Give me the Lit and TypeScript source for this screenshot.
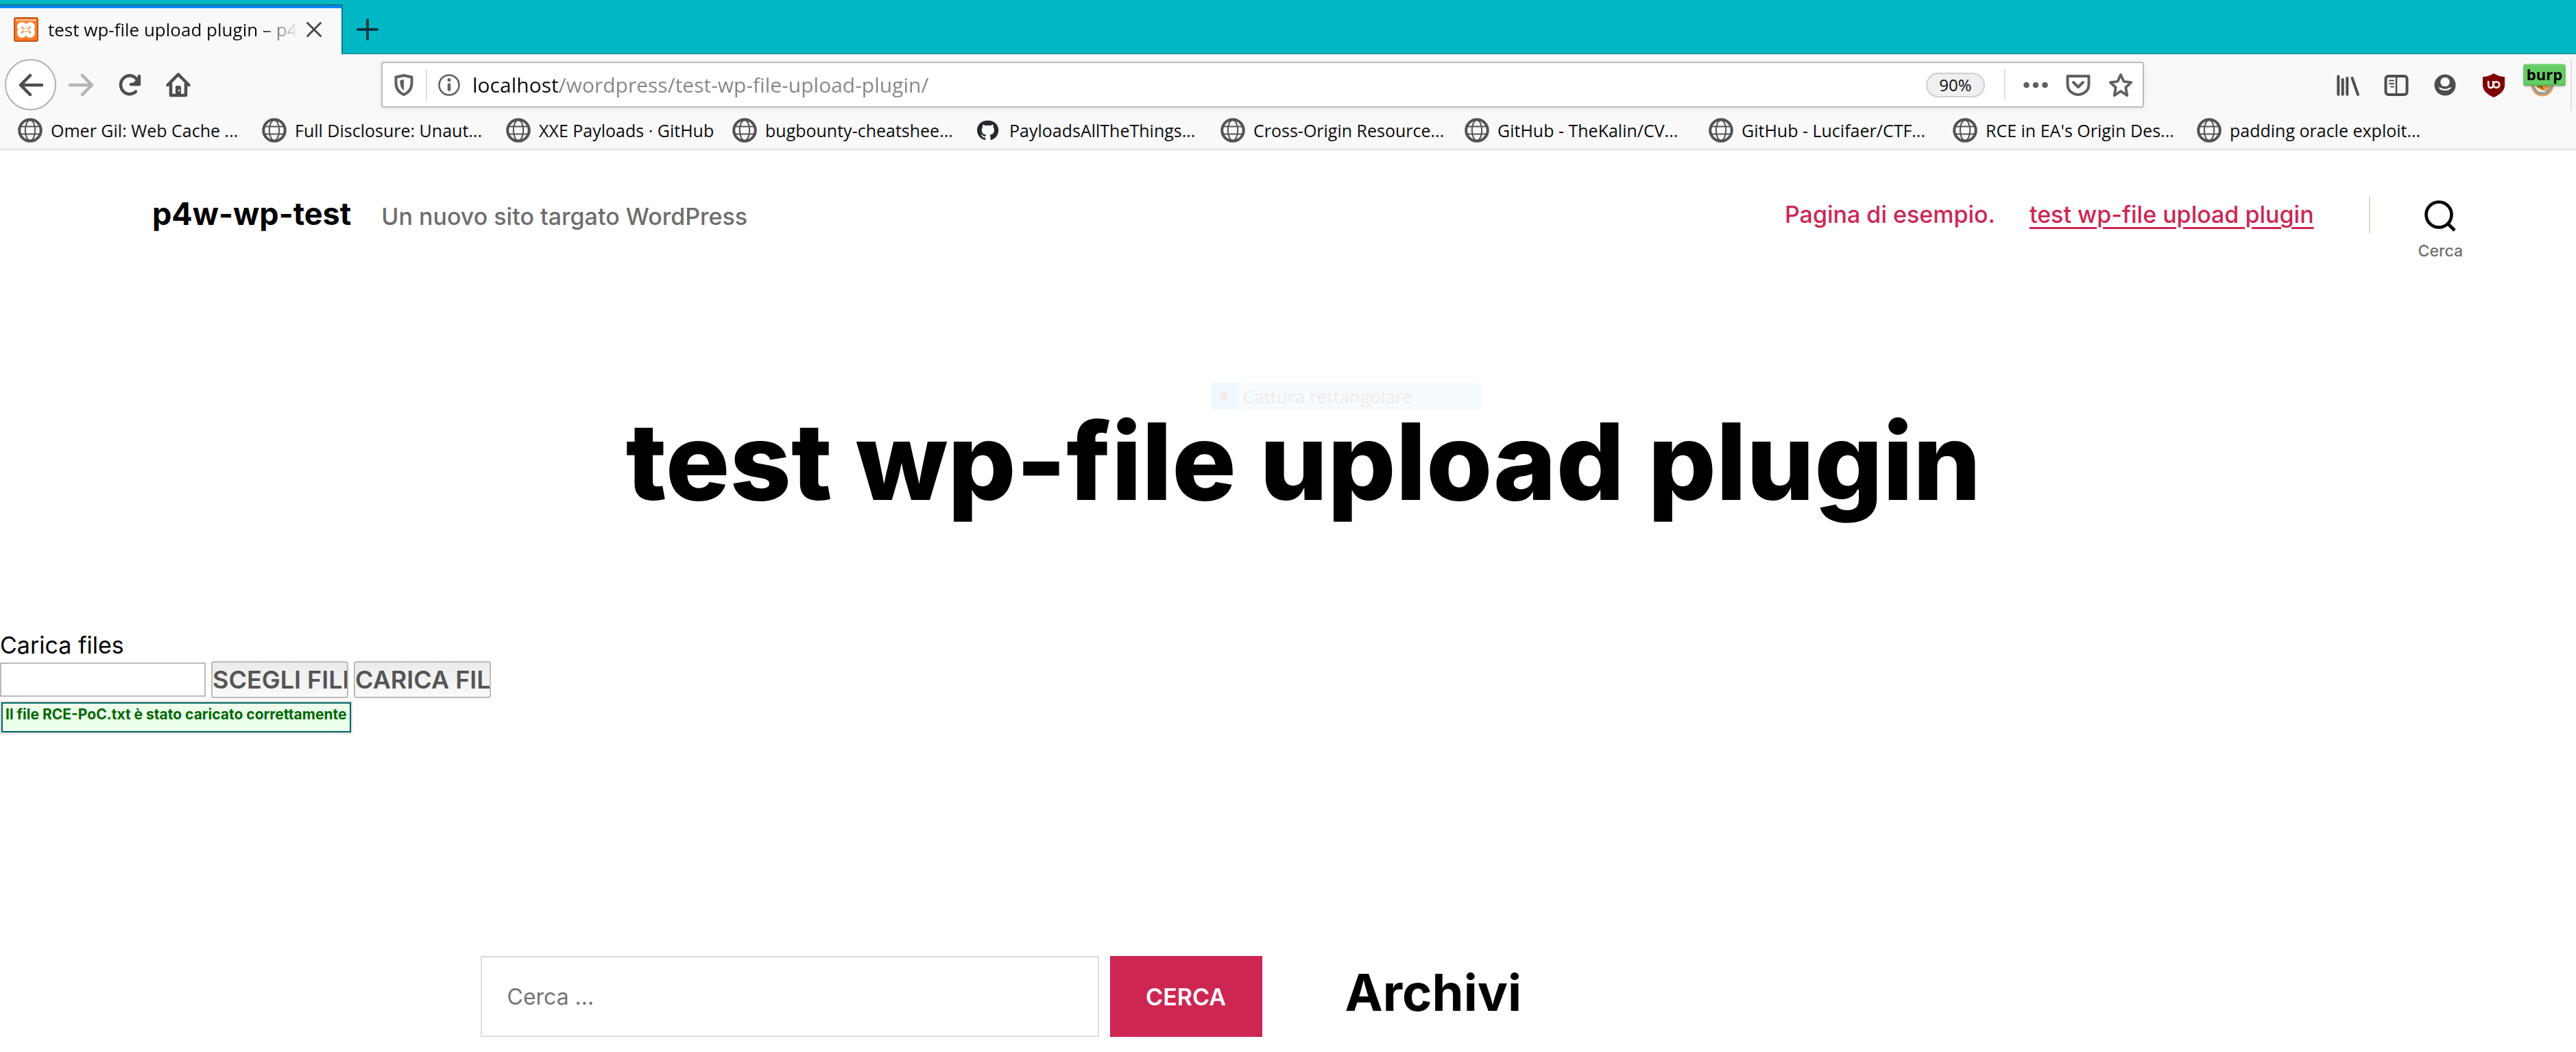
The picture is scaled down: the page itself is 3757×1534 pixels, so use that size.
import { LitElement, html, svg, css } from "lit";
import { customElement } from "lit/decorators.js";

const globe = svg`<circle cx="8" cy="8" r="7" fill="none" stroke="#525254" stroke-width="1.8"/>
  <g fill="none" stroke="#525254" stroke-width="0.9"><ellipse cx="8" cy="8" rx="3.2" ry="6.6"/>
  <path d="M1.6 5.6h12.8M1.6 10.4h12.8"/></g>`;

const github = svg`<path transform="translate(0.6 1.2) scale(0.86)" fill="#24292e" d="M8 .6A7.4 7.4 0 0 0 5.7 15.200c.4.1.5-.2.5-.4v-1.400c-2.100.45-2.500-.9-2.500-.9-.35-.85-.8-1.100-.8-1.100-.7-.45 0-.45 0-.45.75.05 1.150.75 1.150.75.65 1.150 1.750.8 2.200.6.05-.45.25-.8.45-1-1.650-.2-3.400-.8-3.400-3.650 0-.8.3-1.500.75-2-.05-.2-.3-.95.1-2 0 0 .6-.2 2.050.75a7 7 0 0 1 3.700 0c1.400-.95 2-.75 2-.75.4 1.050.15 1.800.1 2 .5.5.75 1.200.75 2 0 2.850-1.700 3.450-3.350 3.650.3.25.5.7.5 1.400v2.050c0 .2.15.45.5.4A7.400 7.400 0 0 0 8 .6z"/>`;

const bookmarks = [
  { text: "Omer Gil: Web Cache ...", icon: globe },
  { text: "Full Disclosure: Unaut...", icon: globe },
  { text: "XXE Payloads · GitHub", icon: globe, short: true },
  { text: "bugbounty-cheatshee...", icon: globe },
  { text: "PayloadsAllTheThings...", icon: github },
  { text: "Cross-Origin Resource...", icon: globe },
  { text: "GitHub - TheKalin/CV...", icon: globe },
  { text: "GitHub - Lucifaer/CTF...", icon: globe },
  { text: "RCE in EA's Origin Des...", icon: globe },
  { text: "padding oracle exploit...", icon: globe },
];

@customElement("browser-chrome")
export class BrowserChrome extends LitElement {
  static styles = css`
    :host {
      display: block;
      font-family: "Open Sans", "Noto Sans", sans-serif;
      font-size: 26px;
      color: #0c0c0d;
      background: #f9f9fa;
      border-bottom: 2px solid #e0e0e1;
    }
    * { box-sizing: border-box; }
    button { border: 0; padding: 0; margin: 0; background: none; font: inherit; color: inherit; }
    svg { display: block; width: 36px; height: 36px; flex: none; }
    a { color: inherit; text-decoration: none; }
    .tabs {
      display: flex;
      height: 79px;
      padding-top: 6px;
      background: #00b7c5;
      box-shadow: inset 0 -1px #00808a;
    }
    .tab {
      display: flex;
      align-items: center;
      width: 500px;
      padding: 0 28px 2px 20px;
      background: #f9f9fa;
      border-top: 2px solid #00808a;
      border-right: 2px solid #00808a;
      box-shadow: inset 0 4px #0a84ff;
    }
    .tab-title {
      flex: 1;
      margin: 0 10px 0 14px;
      line-height: 36px;
      overflow: hidden;
      white-space: nowrap;
      mask-image: linear-gradient(to left, transparent, #000 60px);
    }
    .tab-close svg { width: 24px; height: 24px; }
    .new-tab { margin-left: 18px; }
    .nav { display: flex; align-items: center; height: 89px; padding: 0 6px 0 7px; }
    .back {
      display: grid;
      place-items: center;
      width: 75px;
      height: 75px;
      border: 2px solid #b1b1b3;
      border-radius: 50%;
      background: #fff;
    }
    .tools { display: flex; gap: 35px; margin-left: 18px; width: 456px; }
    .urlbar {
      display: flex;
      align-items: center;
      width: 2571px;
      height: 67px;
      padding: 0 14px 0 13px;
      border: 2px solid #bbbbbc;
      border-radius: 4px;
      background: #fff;
      box-shadow: 0 2px 8px rgba(0, 0, 0, 0.08);
    }
    .rule { width: 2px; height: 46px; background: #e0e0e1; flex: none; }
    .identity { display: flex; align-items: center; gap: 14px; margin-right: 16px; }
    .url {
      flex: 1;
      min-width: 0;
      height: 60px;
      padding: 0;
      border: 0;
      outline: 0;
      font: 30px "Open Sans", "Noto Sans", sans-serif;
      color: transparent;
      background: linear-gradient(to right, #0c0c0d 127px, #858586 127px);
      background-clip: text;
      -webkit-background-clip: text;
    }
    .zoom {
      width: 86px;
      height: 36px;
      border: 2px solid #cfcfd1;
      border-radius: 18px;
      background: #f0f0f1;
      font-size: 24px;
      line-height: 30px;
      text-align: center;
      margin-right: 28px;
    }
    .actions { display: flex; gap: 26px; margin-left: 26px; }
    .extensions { display: flex; align-items: center; gap: 35px; margin-left: auto; height: 75px; }
    .burp { position: relative; }
    .badge {
      position: absolute;
      left: -10px;
      top: -13px;
      width: 62px;
      height: 32px;
      border-radius: 4px;
      background: #66cc66;
      border-top: 2px solid #84d684;
      border-bottom: 2px solid #57b557;
      box-shadow: 0 2px 2px rgba(0, 0, 0, 0.2);
      font-size: 22px;
      font-weight: 700;
      line-height: 26px;
      text-align: center;
      color: #000;
    }
    .edge { width: 2px; height: 75px; background: #dfdfe0; margin-left: -12px; }
    .bookmarks { display: flex; margin: 0; padding: 4px 0 9px 26px; list-style: none; font-size: 25px; }
    .bookmark { width: 356px; }
    .bookmark.short { width: 330px; }
    .bookmark a { display: flex; align-items: center; gap: 12px; line-height: 36px; white-space: nowrap; }
  `;

  render() {
    return html`
      <div class="tabs">
        <div class="tab">
          <svg viewBox="0 0 36 36">
            <rect x="1" y="1" width="34" height="34" rx="2" fill="#fb7a24" stroke="#c25a16" stroke-width="2"/>
            <path d="M3 3h30v3H3z" fill="#f7b080"/>
            <g fill="none" stroke="#fff" stroke-width="6" stroke-linecap="round" stroke-linejoin="round">
              <path d="M15 11.500Q13 10 11 10.500q-3.500 1-3 4.500.5 2 2.500 3.500-3 2-2.500 5 1 3.500 4 3.500 3 0 4-3M21 11.500Q23 10 25 10.500q3.500 1 3 4.500-.5 2-2.500 3.500 3 2 2.500 5-1 3.500-4 3.500-3 0-4-3"/>
            </g>
            <path d="M14 14q4 3 8 0M14 19h8" fill="none" stroke="#fff" stroke-width="3"/>
          </svg>
          <span class="tab-title">test wp-file upload plugin – p4w-wp-test</span>
          <button class="tab-close" aria-label="Chiudi scheda">
            <svg viewBox="0 0 24 24"><path d="M2.500 2.500l19 19M21.500 2.500l-19 19" stroke="#4a4a4b" stroke-width="3" stroke-linecap="round"/></svg>
          </button>
        </div>
        <button class="new-tab" aria-label="Nuova scheda">
          <svg viewBox="0 0 36 36"><path d="M18 4v28M4 18h28" stroke="#063b40" stroke-width="4" stroke-linecap="round"/></svg>
        </button>
      </div>
      <div class="nav">
        <button class="back" aria-label="Indietro">
          <svg viewBox="0 0 36 36"><path d="M17 4L3 18l14 14M3 18h31" fill="none" stroke="#4d4d4e" stroke-width="4.500" stroke-linecap="round" stroke-linejoin="round"/></svg>
        </button>
        <div class="tools">
          <button aria-label="Avanti">
            <svg viewBox="0 0 36 36"><path d="M20 4l14 14-14 14M34 18H2" fill="none" stroke="#b4b4b5" stroke-width="4.500" stroke-linecap="round" stroke-linejoin="round"/></svg>
          </button>
          <button aria-label="Ricarica">
            <svg viewBox="0 0 36 36"><path d="M32 5v12H20" fill="none" stroke="#4d4d4e" stroke-width="4.500" stroke-linecap="round" stroke-linejoin="round"/><path d="M22 16l9-9v9z" fill="#4d4d4e"/><path d="M27 27.500A13 13.500 0 1 1 28 9" fill="none" stroke="#4d4d4e" stroke-width="4.500" stroke-linecap="round"/></svg>
          </button>
          <button aria-label="Pagina iniziale">
            <svg viewBox="0 0 36 36"><path d="M2.500 18L18 2.500 33.500 18M7 16v17h22V16" fill="none" stroke="#4d4d4e" stroke-width="4.500" stroke-linecap="round" stroke-linejoin="round"/><path d="M14 33V21q0-2 2-2h4q2 0 2 2v12z" fill="#4d4d4e"/><circle cx="19" cy="26" r="1.300" fill="#fff"/></svg>
          </button>
        </div>
        <div class="urlbar">
          <div class="identity">
            <svg viewBox="0 0 36 36"><path d="M18 4l11.500 2.500V15q0 12-11.500 17Q6.500 27 6.500 15V6.500z" fill="none" stroke="#606061" stroke-width="4" stroke-linejoin="round"/><path d="M18 10v16q-5-4-5.500-10v-5z" fill="#606061"/></svg>
            <span class="rule"></span>
            <svg viewBox="0 0 36 36"><circle cx="18" cy="18" r="14.500" fill="none" stroke="#606061" stroke-width="2.500"/><path d="M18 17.500v7" stroke="#606061" stroke-width="4.500" stroke-linecap="round"/><circle cx="18" cy="10.500" r="2.500" fill="#606061"/></svg>
          </div>
          <input class="url" type="text" aria-label="Indirizzo" value="localhost/wordpress/test-wp-file-upload-plugin/" />
          <button class="zoom">90%</button>
          <span class="rule"></span>
          <div class="actions">
            <button aria-label="Azioni pagina">
              <svg viewBox="0 0 36 36" fill="#606061"><circle cx="4.500" cy="18" r="4.300"/><circle cx="18" cy="18" r="4.300"/><circle cx="31.500" cy="18" r="4.300"/></svg>
            </button>
            <button aria-label="Salva in Pocket">
              <svg viewBox="0 0 36 36" fill="none" stroke="#606061" stroke-width="4" stroke-linejoin="round" stroke-linecap="round"><path d="M2.500 5h31v12q0 9-8 13-7.500 4-15 0-8-4-8-13z"/><path d="M11 14l7 7 7-7"/></svg>
            </button>
            <button aria-label="Aggiungi ai segnalibri">
              <svg viewBox="0 0 36 36"><path d="M18 3l4.500 9.800 10.700 1.400-7.900 7.300 2 11.700-9.300-6.200-9.300 6.200 2-11.700-7.900-7.300 10.700-1.400z" fill="none" stroke="#606061" stroke-width="3.800" stroke-linejoin="round"/></svg>
            </button>
          </div>
        </div>
        <div class="extensions">
          <button aria-label="Libreria">
            <svg viewBox="0 0 36 36"><path d="M4.300 5.300v26.500M10.700 9.800v22M17.300 7.800v24M24.500 7.800l8.500 24" stroke="#4d4d4e" stroke-width="4" stroke-linecap="round"/></svg>
          </button>
          <button aria-label="Barra laterale">
            <svg viewBox="0 0 36 36"><rect x="2.500" y="5" width="31" height="27" rx="4" fill="none" stroke="#4d4d4e" stroke-width="4"/><path d="M18 5v27" stroke="#4d4d4e" stroke-width="2.500"/><path d="M8 11.500h6M8 16h6M10 20.500h4" stroke="#4d4d4e" stroke-width="2" stroke-linecap="round"/></svg>
          </button>
          <button aria-label="Account">
            <svg viewBox="0 0 36 36"><circle cx="18" cy="18" r="15.500" fill="#4d4d4e"/><circle cx="18" cy="13.500" r="6.800" fill="#f9f9fa"/><path d="M8.500 21.500q2.500-.5 4.500 1 5 2.500 10 0 2-1.500 4.500-1Q25 26 18 26T8.500 21.500z" fill="#f9f9fa"/></svg>
          </button>
          <button aria-label="uBlock Origin">
            <svg viewBox="0 0 36 36"><path d="M18 1Q26 6 34 6v12q0 11-16 18Q2 29 2 18V6q8 0 16-5z" fill="#800000"/><path d="M10.200 12v6q0 4 3.500 4t3.500-4V12" fill="none" stroke="#fff" stroke-width="2.500"/><circle cx="22" cy="17.500" r="4.300" fill="none" stroke="#fff" stroke-width="2.500"/></svg>
          </button>
          <button class="burp" aria-label="FoxyProxy">
            <svg viewBox="0 0 36 36"><circle cx="18" cy="18" r="15.500" fill="#9a9ea3" stroke="#f5a04a" stroke-width="2"/><path d="M5 18l7 9 9 1.500 9-10z" fill="#fff"/><path d="M5 16h25l-4 7-5 4-8-3z" fill="#f39a35"/><path d="M11 21l5-1 3 4" fill="none" stroke="#5b4630" stroke-width="1.500"/></svg>
            <span class="badge">burp</span>
          </button>
          <span class="edge"></span>
        </div>
      </div>
      <ul class="bookmarks">
        ${bookmarks.map(
          (b) => html`<li class="bookmark ${b.short ? "short" : ""}">
            <a href="#"><svg viewBox="0 0 16 16">${b.icon}</svg><span>${b.text}</span></a>
          </li>`
        )}
      </ul>
    `;
  }
}

@customElement("app-root")
export class AppRoot extends LitElement {
  static styles = css`
    :host {
      display: block;
      min-height: 100vh;
      overflow: hidden;
      background: #fff;
      color: #000;
      font-family: Inter, "Liberation Sans", sans-serif;
      font-size: 34px;
    }
    * { box-sizing: border-box; }
    button, input { font-family: inherit; margin: 0; }
    h1, h2, p { margin: 0; }
    .header { display: flex; align-items: flex-start; padding: 64px 165px 0 222px; height: 183px; }
    .brand { display: flex; align-items: baseline; gap: 44px; }
    .site { color: #000; font-size: 45px; font-weight: 700; line-height: 58px; text-decoration: none; }
    .tagline { font-weight: 500; color: #6d6d6d; }
    .menu { display: flex; align-items: center; gap: 50px; margin-left: auto; font-weight: 500; line-height: 60px; }
    .menu a { color: #cd2653; text-decoration: none; }
    .menu a.current { text-decoration: underline; text-decoration-thickness: 3px; text-underline-offset: 6px; }
    .divider { width: 2px; height: 54px; margin: 3px 70px 0 80px; background: #dcd7ca; }
    .search-toggle {
      display: flex;
      flex-direction: column;
      align-items: center;
      gap: 14px;
      padding: 9px 0 0;
      border: 0;
      background: none;
      font-size: 23px;
      font-weight: 500;
      line-height: 28px;
      color: #6d6d6d;
    }
    .search-toggle svg { width: 46px; height: 46px; }
    .hero { position: relative; padding: 199px 0 173px 45px; text-align: center; }
    .title { font-size: 156px; font-weight: 800; line-height: 144px; white-space: nowrap; }
    .ghost {
      position: absolute;
      left: 47%;
      top: 156px;
      display: flex;
      align-items: center;
      width: 396px;
      height: 39px;
      background: #f5fbff;
      color: #f0ebea;
      font: 26px "Open Sans", "Noto Sans", sans-serif;
    }
    .ghost-mark { display: grid; place-items: center; width: 39px; height: 39px; margin-right: 8px; background: #eff8ff; }
    .ghost-mark::before { content: ""; width: 12px; height: 12px; border-radius: 50%; background: #f3e9ea; }
    .upload { display: flex; flex-direction: column; align-items: flex-start; }
    .upload label { line-height: 46px; }
    .row { display: flex; align-items: center; gap: 8px; height: 54px; }
    .file-name { width: 300px; height: 50px; border: 2px solid #bbb; background: #fff; font-size: 34px; }
    .file-button {
      width: 200px;
      height: 54px;
      padding: 0;
      overflow: hidden;
      border: 2px solid #bbb;
      border-radius: 4px;
      background: linear-gradient(#ebebeb, #fafafa);
      color: #555;
      font-size: 36px;
      font-weight: 600;
      line-height: 50px;
      text-align: left;
      white-space: nowrap;
    }
    .message { margin-top: 4px; border: 2px solid #ddd; }
    .message p {
      height: 44px;
      padding: 0 4px;
      border: 2px solid #006666;
      background: #ebffeb;
      color: #006600;
      font-size: 21px;
      font-weight: 700;
      line-height: 32px;
    }
    .widgets {
      display: grid;
      grid-template-columns: 1140px 1140px;
      justify-content: center;
      gap: 121px;
      padding: 324px 0 22px 45px;
    }
    .search { display: flex; gap: 16px; height: 118px; }
    .search input {
      flex: 1;
      min-width: 0;
      padding: 0 37px;
      border: 2px solid #dcdcdc;
      border-radius: 0;
      background: #fff;
      font-size: 32px;
    }
    .search input::placeholder { color: #757575; opacity: 1; }
    .search button {
      width: 222px;
      border: 0;
      background: #cd2653;
      color: #fff;
      font-size: 34px;
      font-weight: 600;
    }
    .archive { font-size: 74px; font-weight: 700; line-height: 106px; }
  `;

  render() {
    return html`
      <browser-chrome></browser-chrome>
      <header class="header">
        <div class="brand">
          <a class="site" href="#">p4w-wp-test</a>
          <span class="tagline">Un nuovo sito targato WordPress</span>
        </div>
        <nav class="menu">
          <a href="#">Pagina di esempio.</a>
          <a class="current" href="#">test wp-file upload plugin</a>
        </nav>
        <span class="divider"></span>
        <button class="search-toggle">
          <svg viewBox="0 0 46 46" fill="none" stroke="#000" stroke-width="4.600"><circle cx="21" cy="21" r="18.500"/><path d="M34 34l10 10"/></svg>
          <span>Cerca</span>
        </button>
      </header>
      <main>
        <section class="hero">
          <div class="ghost"><span class="ghost-mark"></span>Cattura rettangolare</div>
          <h1 class="title">test wp-file upload plugin</h1>
        </section>
        <form class="upload" @submit=${(e: Event) => e.preventDefault()}>
          <label for="file-name">Carica files</label>
          <div class="row">
            <input id="file-name" class="file-name" type="text" />
            <button class="file-button" type="button">SCEGLI FILE</button>
            <button class="file-button" type="submit">CARICA FILE</button>
          </div>
          <div class="message"><p>Il file RCE-PoC.txt è stato caricato correttamente</p></div>
        </form>
      </main>
      <footer class="widgets">
        <form class="search" role="search" @submit=${(e: Event) => e.preventDefault()}>
          <input type="search" aria-label="Cerca" placeholder="Cerca …" />
          <button type="submit">CERCA</button>
        </form>
        <h2 class="archive">Archivi</h2>
      </footer>
    `;
  }
}
